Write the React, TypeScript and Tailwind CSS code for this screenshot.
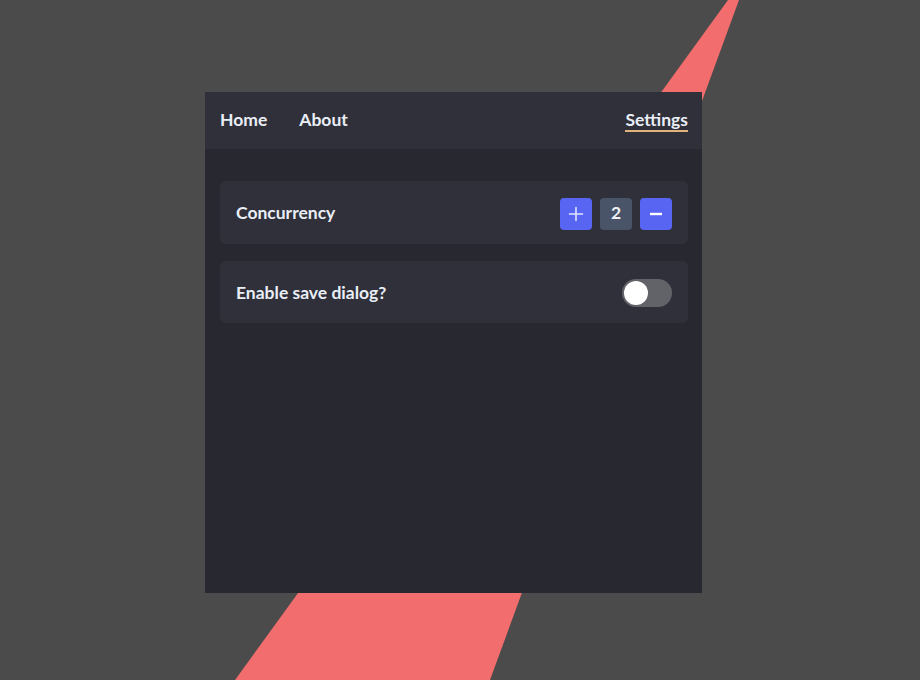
import React, { useState } from "react";

const FONT = { fontFamily: '"Source Sans Pro", Lato, "Open Sans", sans-serif' };

function Stripe() {
  // the pink diagonal band behind the window
  return (
    <svg className="absolute inset-0" width="920" height="680" viewBox="0 0 920 680">
      <polygon points="728,0 739,0 490,680 235,680" fill="#f26d6d" />
    </svg>
  );
}

function Counter() {
  const [value, setValue] = useState(2);
  return (
    <div className="flex items-center gap-2">
      <button
        onClick={() => setValue(value + 1)}
        className="flex h-8 w-8 items-center justify-center rounded bg-[#5865f2]"
      >
        <svg width="16" height="16" viewBox="0 0 16 16" fill="none" stroke="#dfe3ff" strokeWidth="1.6" strokeLinecap="round">
          <path d="M8 1.5v13M1.5 8h13" />
        </svg>
      </button>
      <div className="flex h-8 w-8 items-center justify-center rounded bg-[#4a5468] text-[17.5px] font-bold text-[#eef2f8]">
        {value}
      </div>
      <button
        onClick={() => setValue(Math.max(0, value - 1))}
        className="flex h-8 w-8 items-center justify-center rounded bg-[#5865f2]"
      >
        <svg width="16" height="16" viewBox="0 0 16 16" fill="none" stroke="#ffffff" strokeWidth="2.4">
          <path d="M2 8h12" />
        </svg>
      </button>
    </div>
  );
}

function Toggle() {
  const [on, setOn] = useState(false);
  return (
    <button
      onClick={() => setOn(!on)}
      className={`flex h-7 w-[50px] items-center rounded-full px-[2px] ${on ? "justify-end bg-[#5865f2]" : "justify-start bg-[#626269]"}`}
    >
      <span className="h-6 w-6 rounded-full bg-white" />
    </button>
  );
}

export default function App() {
  return (
    <div className="relative h-[680px] w-[920px] overflow-hidden bg-[#4b4b4b]" style={FONT}>
      <Stripe />
      <div className="absolute left-[205px] top-[92px] flex h-[501px] w-[497px] flex-col bg-[#282831]">
        <nav className="flex h-[57px] items-center bg-[#30303a] pl-[15px] pr-[14px] text-[17.5px] font-bold text-[#e9eef6]">
          <a className="mr-[32px]">Home</a>
          <a>About</a>
          <a className="ml-auto border-b-2 border-[#e2b27c] leading-[21px]">Settings</a>
        </nav>
        <div className="flex flex-col gap-[17px] pl-[15px] pr-[14px] pt-8">
          <div className="flex h-[63px] items-center justify-between rounded-md bg-[#30303a] px-4 pt-[2px]">
            <span className="text-[17.5px] font-bold text-[#e9eef6]">Concurrency</span>
            <Counter />
          </div>
          <div className="flex h-[62px] items-center justify-between rounded-md bg-[#30303a] px-4 pt-[2px]">
            <span className="text-[17.5px] font-bold text-[#e9eef6]">Enable save dialog?</span>
            <Toggle />
          </div>
        </div>
      </div>
    </div>
  );
}
